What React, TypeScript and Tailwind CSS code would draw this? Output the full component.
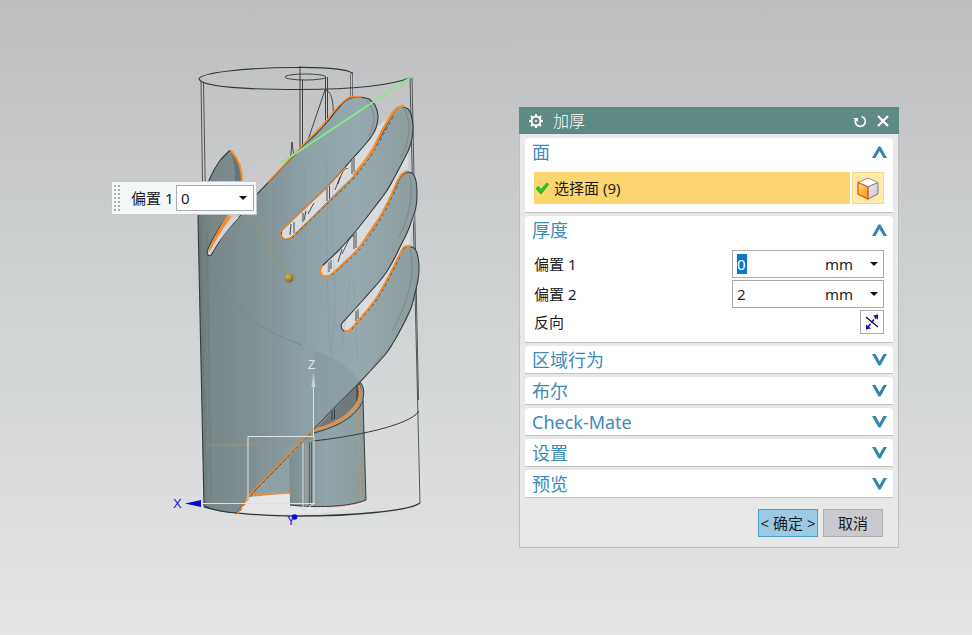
import React, { useState } from "react";

const uiFont =
  "font-['Noto_Sans','Noto_Sans_CJK_SC',sans-serif]";

type Point = [number, number];

/** Smooth curve through a list of points. */
function curve(points: Point[], continued = false) {
  let d = (continued ? "L" : "M") + points[0].join(" ");
  for (let i = 0; i < points.length - 1; i++) {
    const a = points[Math.max(i - 1, 0)];
    const b = points[i];
    const c = points[i + 1];
    const e = points[Math.min(i + 2, points.length - 1)];
    d += `C${b[0] + (c[0] - a[0]) / 6} ${b[1] + (c[1] - a[1]) / 6} ${c[0] - (e[0] - b[0]) / 6} ${c[1] - (e[1] - b[1]) / 6} ${c[0]} ${c[1]}`;
  }
  return d;
}

const leafLeft: Point[] = [[198, 218], [202, 199], [210, 178], [219, 162], [229, 151]];
const leafRight: Point[] = [[229, 151], [233, 153], [238, 165], [241, 180], [240, 196], [236, 207], [228, 215]];
const notch: Point[] = [[228, 215], [218, 230], [208, 249], [208, 255], [211, 255], [214, 250], [225, 233], [240, 216], [258, 193]];
const fingerOneTop: Point[] = [[258, 193], [280, 170], [302, 147], [316, 134], [328, 121], [336, 111], [344, 102], [351, 98], [360, 97], [369, 99]];
const fingerOneSide: Point[] = [[369, 99], [375, 105], [378, 116], [376, 128], [371, 137], [363, 147], [353, 158], [340, 173], [327, 187], [305, 208], [282, 230]];
const slotOneEnd: Point[] = [[282, 230], [281, 235], [284, 239], [288, 239], [292, 237]];
const fingerTwoTop: Point[] = [[292, 237], [309, 221], [327, 203], [340, 190], [354, 176], [364, 163], [373, 150], [383, 132], [393, 114], [398, 108], [403, 107]];
const fingerTwoSide: Point[] = [[403, 107], [408, 109], [411, 114], [413, 126], [412, 138], [409, 149], [402, 163], [393, 180], [386, 192], [377, 204], [367, 217], [355, 232], [339, 250], [322, 266]];
const slotTwoEnd: Point[] = [[322, 266], [320, 271], [323, 276], [328, 276], [332, 274]];
const fingerThreeTop: Point[] = [[332, 274], [345, 262], [358, 249], [369, 233], [380, 217], [389, 200], [398, 182], [402, 175], [408, 172]];
const fingerThreeSide: Point[] = [[408, 172], [413, 174], [416, 181], [417, 194], [416, 207], [412, 220], [407, 233], [401, 245], [393, 261], [383, 277], [363, 300], [343, 322]];
const slotThreeEnd: Point[] = [[343, 322], [341, 326], [344, 331], [348, 331], [352, 328]];
const fingerFourTop: Point[] = [[352, 328], [365, 313], [377, 297], [389, 276], [400, 254], [404, 248], [409, 246]];
const fingerFourSide: Point[] = [[409, 246], [415, 249], [418, 257], [419, 268], [418, 280], [415, 293], [411, 308], [402, 327], [393, 343], [384, 356], [360, 382]];
const cutEdge: Point[] = [[360, 382], [337, 405], [313, 430], [282, 462], [250, 495], [237, 513]];

const skinPath =
  curve(leafLeft) +
  [leafRight, notch, fingerOneTop, fingerOneSide, slotOneEnd, fingerTwoTop, fingerTwoSide, slotTwoEnd, fingerThreeTop, fingerThreeSide, slotThreeEnd, fingerFourTop, fingerFourSide, cutEdge]
    .map((part) => curve(part, true))
    .join("") +
  "C224 512 210 509 204 506Z";

function Chevron({ up = false }: { up?: boolean }) {
  return (
    <svg width="15" height="12" viewBox="0 0 15 12" aria-hidden="true">
      <path
        d={up ? "M0 12 6.500 .5H8.500L15 12H11.500L7.500 5 3.500 12Z" : "M0 0 6.500 11.500H8.500L15 0H11.500L7.500 7 3.500 0Z"}
        fill="#3385b3"
      />
    </svg>
  );
}

function Caret() {
  return (
    <svg width="8" height="4" viewBox="0 0 8 4" aria-hidden="true">
      <path d="M0 0H8L4 4Z" fill="#111" />
    </svg>
  );
}

function Section({
  title,
  open = false,
  children,
}: {
  title: string;
  open?: boolean;
  children?: React.ReactNode;
}) {
  return (
    <section className="rounded-t-sm border-b border-[#c3c3c5] bg-white">
      <h2>
        <button
          type="button"
          aria-expanded={open}
          className="flex h-[27px] w-full items-center justify-between pr-1.5 pl-[7px] text-[18px] leading-6 text-[#3d8ab8]"
        >
          {title}
          <Chevron up={open} />
        </button>
      </h2>
      {children}
    </section>
  );
}

function LengthField({
  id,
  label,
  initial,
  highlighted = false,
}: {
  id: string;
  label: string;
  initial: string;
  highlighted?: boolean;
}) {
  const [value, setValue] = useState(initial);
  return (
    <div className="flex items-center justify-between">
      <label htmlFor={id}>{label}</label>
      <div className="flex h-7 w-[152px] items-center border border-[#ababaf] bg-white pr-[5px] pl-1">
        <div className="flex-1">
          <input
            id={id}
            value={value}
            onChange={(e) => setValue(e.target.value)}
            className={
              "block field-sizing-content h-5 min-w-2.5 leading-5 outline-none " +
              (highlighted ? "bg-[#0b78d0] text-white" : "")
            }
          />
        </div>
        <select
          aria-label={label + " mm"}
          className="w-[53px] appearance-none bg-transparent outline-none"
        >
          <option>mm</option>
        </select>
        <span className="pointer-events-none -ml-2">
          <Caret />
        </span>
      </div>
    </div>
  );
}

function Model() {
  return (
    <svg
      className="absolute top-[50px] left-[160px]"
      width="290"
      height="490"
      viewBox="160 50 290 490"
      fill="none"
      role="img"
      aria-label="加厚"
    >
      <defs>
        <linearGradient id="skin" gradientUnits="userSpaceOnUse" x1="198" y1="0" x2="420" y2="0">
          <stop offset="0" stopColor="#6d7b7a" />
          <stop offset="0.06" stopColor="#788788" />
          <stop offset="0.25" stopColor="#7f9094" />
          <stop offset="0.5" stopColor="#8fa2a8" />
          <stop offset="0.72" stopColor="#96a9ae" />
          <stop offset="1" stopColor="#8c9c9e" />
        </linearGradient>
        <linearGradient id="drum" gradientUnits="userSpaceOnUse" x1="289" y1="0" x2="366" y2="0">
          <stop offset="0" stopColor="#7d8d90" />
          <stop offset="0.5" stopColor="#93a5aa" />
          <stop offset="1" stopColor="#8a9b9d" />
        </linearGradient>
        <radialGradient id="ball" cx="0.35" cy="0.3" r="0.8">
          <stop offset="0" stopColor="#d9bb50" />
          <stop offset="1" stopColor="#796016" />
        </radialGradient>
      </defs>

      {/* stock cylinder, back edges */}
      <g stroke="#333637" strokeWidth="0.900">
        <path d="M199 79C200 73 245 67.500 296 67.500 330 67 353 70 352 74" strokeWidth="1.200" />
        <path d="M199 79C202 87 250 89.500 300 89.500 352 89.500 392 85 411 77.500" strokeWidth="1.200" />
        <ellipse cx="305.500" cy="77" rx="20.500" ry="3" />
        <path d="M201 82 203 214M203.500 83 205.500 200" strokeWidth="0.800" />
        <path d="M300 66V150M302.500 80V150M325.500 77V125M327.500 77V122" />
        <path d="M350.500 74V100M352.500 72V100" strokeWidth="0.600" />
        <path d="M308 140 325 90C331 90 334 102 333 116M292 142 290 164M292 142 294.500 162" />
        <path d="M410 78 420 503M412 78 418.500 400" strokeWidth="0.800" />
        <path d="M204 507C220 512 255 516 300 516 350 516 410 511 420 503" strokeWidth="1.300" />
      </g>

      {/* light floor and slot interiors */}
      <path d="M238 512 250 494 291 492V506L313 508 362 502 366 501C350 515 280 516 238 512Z" fill="#e6e6e8" />
      <path d="M353 158 327 187 282 230 284 239 292 237 327 203 354 176 373 150 393 114 376 128ZM393 180 377 204 355 232 322 266 323 276 332 274 358 249 380 217 398 182 408 172 409 149ZM401 245 383 277 343 322 344 331 352 328 377 297 400 254 409 246 416 207Z" fill="#d9dcde" />

      {/* inner drum */}
      <path d="M248 497 300 441 315 430 315 492 291 493Z" fill="#8fa1a5" />
      <path d="M289 458 313 431 360 382C365 387 364 394 363 400L366 500C350 507 314 508 290 505Z" fill="url(#drum)" />
      <path d="M315 430 360 382C366 397 351 417 315 430Z" fill="#71797d" />
      <path d="M332 411V420M334.500 409V419M357 385V401M359 384V398" stroke="#33383a" />

      {/* skin surface with four fingers */}
      <path d={skinPath} fill="url(#skin)" stroke="#343a3b" strokeWidth="1.100" />
      <path d="M230 151C240 157 243 178 240 196L235 182C235 169 234 160 230 151Z" fill="#687679" />
      <path d="M200 225 206 480M207 230 211 495" stroke="#596b6c" strokeWidth="0.800" opacity="0.45" />
      <path d="M206 273C232 305 256 330 302 345" stroke="#687d80" strokeWidth="1" opacity="0.5" />
      <path d="M306 349C330 353 351 368 360 382L313 430V352Z" fill="#7f9297" opacity="0.35" />
      <path d="M302 165V350M305 170V345M326 150C329 218 324 315 333 360M350 280 342 350M354 280 358 363M334 180C325 240 344 290 330 352" stroke="#718891" strokeWidth="0.800" opacity="0.3" />
      <path d="M367 101C376 111 376 125 368 137M404 109C412 122 410 140 401 157M409 175C415 193 408 220 399 237M410 249C416 275 408 303 392 331M366 376 382 355" stroke="#74786b" strokeWidth="1" opacity="0.6" />

      {/* strokes visible through the slots */}
      <path d="M291 224 290 235M294 222V233M303 213V222M306 211 304 220M314 203 308 214M327 188V201M329.500 186V199M340 177 335 190M348 169C345 166 341 174 338 184M352 160V174M354 158V172M329 262V272M331 260V269M342 249 338 262M354 236C350 235 346 246 342 254M354 234V249M356 232V248M356 311V321M358 309V319" stroke="#3b3d45" strokeWidth="0.900" />

      {/* selected orange edges */}
      <g stroke="#f58d2c" strokeWidth="1.500" strokeLinecap="round" strokeLinejoin="round">
        <path d={curve([[268, 182], [302, 146], [315, 133], [327, 120], [335, 110], [343, 102], [350, 97], [361, 97]])} />
        <path d={curve([[345, 168], [327, 187], [305, 208], [282, 230], [281, 235], [284, 239], [288, 239], [292, 237], [309, 221], [327, 203], [340, 190], [354, 176]])} strokeWidth="1.200" />
        <path d={curve([[354, 175], [364, 162], [373, 149], [382, 131], [392, 114], [397, 108], [403, 106]])} strokeWidth="2.500" />
        <path d={curve([[322, 266], [320, 271], [323, 276], [328, 276], [332, 274], [345, 262], [358, 249], [369, 233], [380, 217], [389, 200], [397, 182], [401, 175], [407, 171]])} strokeWidth="2" />
        <path d={curve([[345, 331], [348, 331], [352, 328], [365, 313], [377, 297], [389, 276], [400, 254], [404, 247], [410, 246]])} strokeWidth="2" />
        <path d="M231 151C238 158 242 169 242 181" strokeWidth="2" />
        <path d="M228 216C221 228 214 238 210 251" strokeWidth="2.500" />
        <path d="M238 513 250 494 313 430M250 495 290 493" />
        <path d="M316 429C336 425 365 411 359 386" strokeWidth="2" />
        <path d="M327 507C345 507 359 504 366 500M358 400 361 500" strokeWidth="0.800" opacity="0.6" />
      </g>
      <path d="M209 253C216 238 225 227 235 216L239 217C228 229 220 239 213 251L210 255Z" fill="#d4d5d5" />
      <path d="M210 249C217 236 224 225 231 216" stroke="#f18a2c" strokeWidth="1.500" />
      <path d="M314 433C340 426 356 416 363 401M360 382C366 389 363 397 363 400L366 500M290 505C314 508 350 507 366 500" stroke="#363b3d" strokeWidth="1" />
      <path d={curve([[292, 238], [327, 204], [354, 178], [374, 151], [394, 115]]) + curve([[332, 275], [359, 250], [381, 218], [399, 183]]) + curve([[352, 329], [378, 298], [401, 255]]) + "M240 511 253 493 311 433"} stroke="#454238" strokeWidth="0.700" strokeDasharray="3 3" />
      <path d="M313 441C350 437 410 426 419 411" stroke="#37393a" strokeWidth="1" />
      <path d="M309.500 442V505M311.500 442V504" stroke="#4a4d4c" strokeWidth="0.800" />
      <path d="M207 445C240 446 278 444 313 438" stroke="#a0906f" strokeWidth="1.200" />
      <path d="M306 443V507" stroke="#b5a389" strokeWidth="1" />

      {/* measuring guides */}
      <path d="M281 163 411 77" stroke="#7df084" strokeWidth="1.600" />
      <path d="M248 215 289 278" stroke="#a3924f" strokeWidth="1" />
      <circle cx="289" cy="278" r="4.500" fill="url(#ball)" />

      {/* coordinate system */}
      <path d="M248 503V436.500H314V503M189 503.500H315M303 443V511L315 503M313.500 376V436" stroke="#dce1e3" strokeWidth="1" />
      <path d="M313.500 372 311.500 387H315.500Z" fill="#c9d0d3" />
      <text x="308" y="369" fontSize="12" fill="#dfe4e6" className="font-['Liberation_Sans',sans-serif]">Z</text>
      <path d="M185 503.500 201 500V507Z" fill="#0805d8" />
      <text x="173" y="508" fontSize="13" fill="#1714e8" className="font-['Liberation_Sans',sans-serif]">X</text>
      <circle cx="294.500" cy="517" r="2.800" fill="#0805e8" />
      <text x="287" y="525" fontSize="12" fill="#1714e8" className="font-['Liberation_Sans',sans-serif]">Y</text>
    </svg>
  );
}

function OffsetToolbar() {
  const [value, setValue] = useState("0");
  return (
    <div className="absolute top-[181px] left-[111px] flex h-[34px] w-[146px] items-center border border-[#c6c9ca] bg-[#f4f7f8] pr-0.5 pl-0.5">
      <svg width="6" height="27" viewBox="0 0 6 27" aria-hidden="true">
        {[0, 4, 8, 12, 16, 20, 24].map((y) => (
          <g key={y} fill="#a9abad">
            <rect x="0" y={y} width="2" height="2" />
            <rect x="4" y={y} width="2" height="2" />
          </g>
        ))}
      </svg>
      <label htmlFor="quick-offset" className="ml-[11px] flex-1 whitespace-nowrap">
        偏置 1
      </label>
      <div className="flex h-[26px] w-[78px] items-center border border-[#a9abad] bg-white pr-1.5 pl-1">
        <input
          id="quick-offset"
          value={value}
          onChange={(e) => setValue(e.target.value)}
          className="w-0 flex-1 bg-transparent outline-none"
        />
        <button type="button" aria-label="偏置 1">
          <Caret />
        </button>
      </div>
    </div>
  );
}

function ThickenDialog() {
  return (
    <div
      role="dialog"
      aria-labelledby="dialog-title"
      className="absolute top-[107px] left-[519px] w-[380px] border border-t-0 border-[#bebfc1] bg-[#e8e8e9]"
    >
      <header className="-mx-px flex h-[27px] items-center bg-[#5d8a82] px-2.5 text-white">
        <svg width="14" height="14" viewBox="0 0 14 14" fill="none" stroke="currentColor" aria-hidden="true">
          <circle cx="7" cy="7" r="4.500" strokeWidth="2" />
          <circle cx="7" cy="7" r="1" fill="currentColor" stroke="none" />
          <path d="M7 0V2.500M7 11.500V14M0 7H2.500M11.500 7H14M2 2 3.700 3.700M10.300 10.300 12 12M12 2 10.300 3.700M3.700 10.300 2 12" strokeWidth="2" />
        </svg>
        <h1 id="dialog-title" className="ml-2.5 flex-1 text-[16px] leading-6 font-light">
          加厚
        </h1>
        <button type="button" aria-label="重置">
          <svg width="14" height="14" viewBox="0 0 14 14" fill="none" aria-hidden="true">
            <path d="M8.500 2.500A5 5 0 1 1 2.500 6" stroke="white" strokeWidth="1.800" />
            <path d="M0 4H5V8Z" fill="white" />
          </svg>
        </button>
        <button type="button" aria-label="关闭" className="ml-2.5">
          <svg width="12" height="12" viewBox="0 0 12 12" aria-hidden="true">
            <path d="M1 1 11 11M11 1 1 11" stroke="white" strokeWidth="2.200" />
          </svg>
        </button>
      </header>

      <div className="flex flex-col gap-[3px] px-[5px] pt-1">
        <Section title="面" open>
          <div className="flex gap-0.5 px-[9px] pt-[7px] pb-2">
            <button type="button" className="flex h-8 flex-1 items-center bg-[#fbd66f] pl-0.5">
              <svg width="13" height="13" viewBox="0 0 13 13" aria-hidden="true">
                <path d="M0 6.500 2.500 4.500 5 7.500 11 1 12.500 2.500 5 12Z" fill="#20d12c" stroke="#109b22" strokeWidth="0.800" />
              </svg>
              <span className="ml-[5px]">选择面 (9)</span>
            </button>
            <button
              type="button"
              aria-label="面"
              className="flex size-8 items-center justify-center border border-[#f6d98a] bg-[#ffe9a8]"
            >
              <svg width="22" height="23" viewBox="0 0 22 23" aria-hidden="true">
                <defs>
                  <linearGradient id="cube-left" x1="0" y1="0" x2="1" y2="1">
                    <stop offset="0" stopColor="#ffe176" />
                    <stop offset="1" stopColor="#fb9511" />
                  </linearGradient>
                  <linearGradient id="cube-right" x1="0" y1="0" x2="1" y2="1">
                    <stop offset="0" stopColor="#f5f5fa" />
                    <stop offset="1" stopColor="#bcbdca" />
                  </linearGradient>
                </defs>
                <path d="M1 5.500 11 1 21 5.500 11 10Z" fill="#fff" stroke="#9e8f87" />
                <path d="M11 10 21 5.500V17L11 22Z" fill="url(#cube-right)" stroke="#857e82" />
                <path d="M1 5.500 11 10V22L1 17Z" fill="url(#cube-left)" stroke="#e85124" strokeWidth="1.300" />
              </svg>
            </button>
          </div>
        </Section>

        <Section title="厚度" open>
          <div className="flex flex-col gap-0.5 px-[9px] pt-[7px] pb-2">
            <LengthField id="offset-1" label="偏置 1" initial="0" highlighted />
            <LengthField id="offset-2" label="偏置 2" initial="2" />
            <div className="flex items-center justify-between">
              <span id="reverse-label">反向</span>
              <button
                type="button"
                aria-labelledby="reverse-label"
                className="flex size-6 items-center justify-center border border-[#ababaf] bg-white"
              >
                <svg width="14" height="16" viewBox="0 0 14 16" fill="none" aria-hidden="true">
                  <path d="M1 3 13 13" stroke="#111" strokeWidth="1.200" />
                  <path d="M3 13 11 3" stroke="#1b0ba8" strokeWidth="1.600" strokeDasharray="4 1.500" />
                  <path d="M13 0.500V5.500L8 1.500ZM1 15.500V10.500L6 14.500Z" fill="#1b0ba8" />
                </svg>
              </button>
            </div>
          </div>
        </Section>

        <Section title="区域行为" />
        <Section title="布尔" />
        <Section title="Check-Mate" />
        <Section title="设置" />
        <Section title="预览" />
      </div>

      <footer className="flex justify-end gap-[5px] pt-[11px] pr-[15px] pb-2.5">
        <button type="button" className="h-7 w-[60px] border border-[#4a9fcb] bg-[#9bcbe3] whitespace-nowrap">
          &lt; 确定 &gt;
        </button>
        <button type="button" className="h-7 w-[60px] border border-[#adadb2] bg-[#c9c9ce]">
          取消
        </button>
      </footer>
    </div>
  );
}

export default function App() {
  return (
    <main
      className={
        "relative min-h-screen overflow-hidden bg-linear-to-b from-[#bdbec0] via-[#d0d3d4] to-[#e4e5e7] text-[15px] leading-5 text-[#1c1c1e] " +
        uiFont
      }
    >
      <Model />
      <OffsetToolbar />
      <ThickenDialog />
    </main>
  );
}
